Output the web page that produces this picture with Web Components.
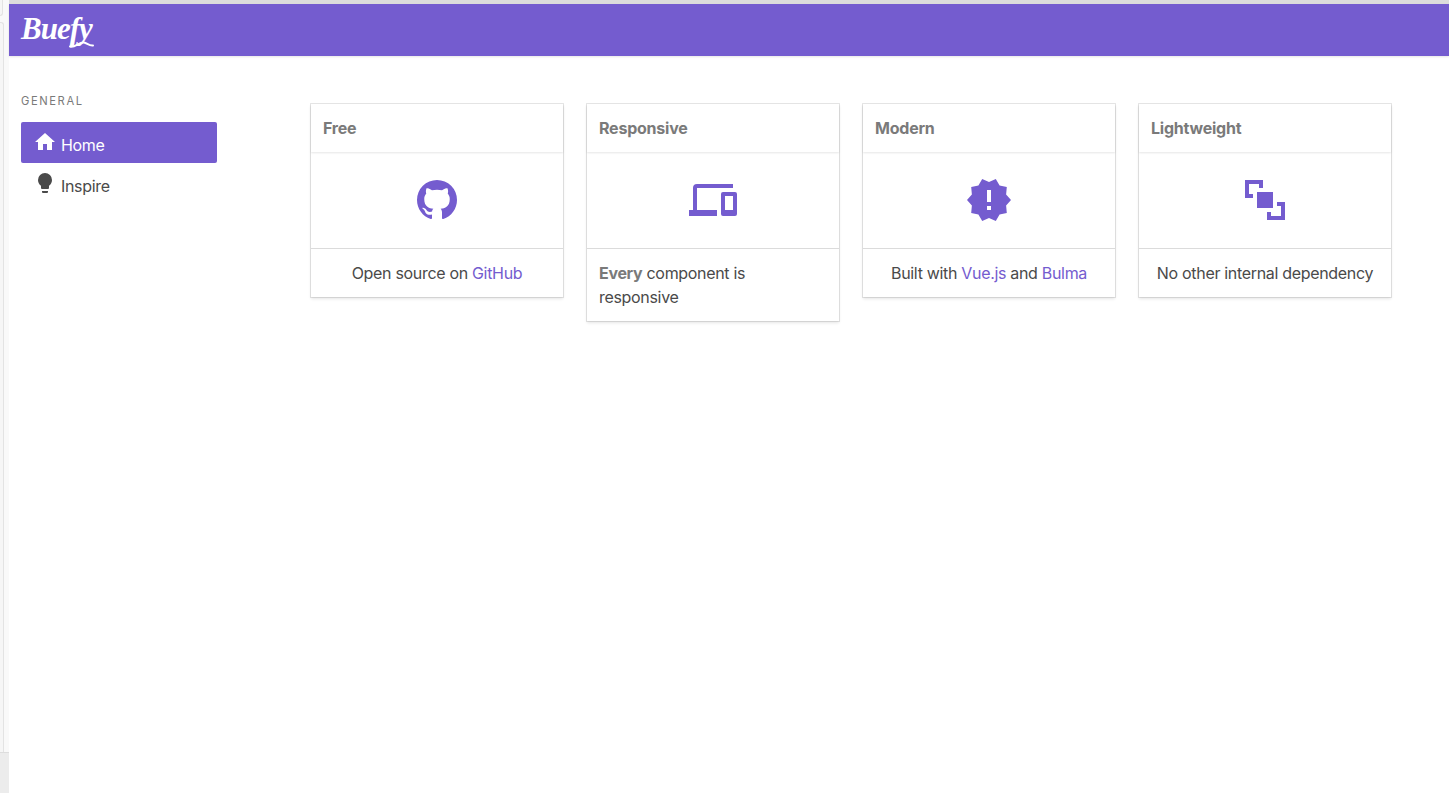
<!DOCTYPE html>
<html lang="en">
<head>
<meta charset="UTF-8">
<title>Buefy</title>
<style>
  html, body { margin: 0; height: 100%; background: #fff; }
  body { font-family: Inter, "Liberation Sans", sans-serif; font-size: 16px; line-height: 24px; letter-spacing: -.32px; color: #4a4a4a; }
  a { color: #745ccf; text-decoration: none; }
  b { color: #7a7a7a; }
</style>
</head>
<body>
<template id="icon-paths">
  <svg data-name="home"><path d="M10,20V14H14V20H19V12H22L12,3L2,12H5V20H10Z"/></svg>
  <svg data-name="lightbulb"><path d="M12,2A7,7 0 0,0 5,9C5,11.38 6.19,13.47 8,14.74V17A1,1 0 0,0 9,18H15A1,1 0 0,0 16,17V14.74C17.81,13.47 19,11.38 19,9A7,7 0 0,0 12,2M9,21A1,1 0 0,0 10,22H14A1,1 0 0,0 15,21V20H9V21Z"/></svg>
  <svg data-name="github"><path d="M12,2A10,10 0 0,0 2,12C2,16.42 4.87,20.17 8.84,21.5C9.34,21.58 9.5,21.27 9.5,21C9.5,20.77 9.5,20.14 9.5,19.31C6.73,19.91 6.14,17.97 6.14,17.97C5.68,16.81 5.03,16.5 5.03,16.5C4.12,15.88 5.1,15.9 5.1,15.9C6.1,15.97 6.63,16.93 6.63,16.93C7.5,18.45 8.97,18 9.54,17.76C9.63,17.11 9.89,16.67 10.17,16.42C7.95,16.17 5.62,15.31 5.62,11.5C5.62,10.39 6,9.5 6.65,8.79C6.55,8.54 6.2,7.5 6.75,6.15C6.75,6.15 7.59,5.88 9.5,7.17C10.29,6.95 11.15,6.84 12,6.84C12.85,6.84 13.71,6.95 14.5,7.17C16.41,5.88 17.25,6.15 17.25,6.15C17.8,7.5 17.45,8.54 17.35,8.79C18,9.5 18.38,10.39 18.38,11.5C18.38,15.32 16.04,16.16 13.81,16.41C14.17,16.72 14.5,17.33 14.5,18.26C14.5,19.6 14.5,20.68 14.5,21C14.5,21.27 14.66,21.59 15.17,21.5C19.14,20.16 22,16.42 22,12A10,10 0 0,0 12,2Z"/></svg>
  <svg data-name="cellphone-link"><path d="M22,17H18V10H22M23,8H17A1,1 0 0,0 16,9V19A1,1 0 0,0 17,20H23A1,1 0 0,0 24,19V9A1,1 0 0,0 23,8M4,6H22V4H4A2,2 0 0,0 2,6V17H0V20H14V17H4V6Z"/></svg>
  <svg data-name="alert-decagram"><path d="M23,12L20.56,9.22L20.9,5.54L17.29,4.72L15.4,1.54L12,3L8.6,1.54L6.71,4.72L3.1,5.53L3.44,9.21L1,12L3.44,14.78L3.1,18.47L6.71,19.29L8.6,22.47L12,21L15.4,22.46L17.29,19.28L20.9,18.46L20.56,14.78L23,12M13,17H11V15H13V17M13,13H11V7H13V13Z"/></svg>
  <svg data-name="arrange-send-to-back"><path d="M2,2H11V6H9V4H4V9H6V11H2V2M22,13V22H13V18H15V20H20V15H18V13H22M8,8H16V16H8V8Z"/></svg>
</template>

<app-shell>
  <app-navbar slot="nav"></app-navbar>
  <side-menu slot="menu">
    <menu-item icon="home" active>Home</menu-item>
    <menu-item icon="lightbulb">Inspire</menu-item>
  </side-menu>
  <card-grid slot="content">
    <feature-card heading="Free" icon="github">Open source on <a href="#">GitHub</a></feature-card>
    <feature-card heading="Responsive" icon="cellphone-link" left><b>Every</b> component is responsive</feature-card>
    <feature-card heading="Modern" icon="alert-decagram">Built with <a href="#">Vue.js</a> and <a href="#">Bulma</a></feature-card>
    <feature-card heading="Lightweight" icon="arrange-send-to-back">No other internal dependency</feature-card>
  </card-grid>
</app-shell>

<script>
  const paths = document.getElementById('icon-paths').content;

  class BIcon extends HTMLElement {
    constructor() {
      super();
      const size = this.getAttribute('size') || 24;
      const src = paths.querySelector(`[data-name="${this.getAttribute('name')}"] path`);
      this.attachShadow({ mode: 'open' }).innerHTML = `
        <style>
          :host { display: block; width: ${size}px; height: ${size}px; flex: none; }
          svg { display: block; width: 100%; height: 100%; fill: currentColor; }
        </style>
        <svg viewBox="0 0 24 24"><path d="${src.getAttribute('d')}"/></svg>`;
    }
  }

  class AppNavbar extends HTMLElement {
    constructor() {
      super();
      this.attachShadow({ mode: 'open' }).innerHTML = `
        <style>
          :host {
            display: flex; align-items: center; height: 52px; padding-left: 12px;
            background: #745ccf; color: #fff;
            box-shadow: 0 1px 2px rgba(10,10,10,.1);
            position: relative;
          }
          .logo {
            position: relative;
            font: italic bold 31px/1 "Liberation Serif", serif;
            letter-spacing: -1px;
            margin-top: -3px;
          }
          svg { position: absolute; left: 46px; top: 25px; width: 27px; height: 11px; fill: none; stroke: #fff; stroke-width: 2; stroke-linecap: round; }
        </style>
        <div class="logo">Buefy<svg viewBox="0 0 27 11"><path d="M3,8.5 C8,10 12,4 17,4.5 C20,5 22,8 26,7.5"/></svg></div>`;
    }
  }

  class SideMenu extends HTMLElement {
    constructor() {
      super();
      this.attachShadow({ mode: 'open' }).innerHTML = `
        <style>
          :host { display: block; width: 196px; flex: none; padding: 33px 0 0 12px; }
          p {
            margin: 0 0 9px; font-size: 11.2px; line-height: 24px; letter-spacing: 1.6px;
            text-transform: uppercase; color: #7a7a7a;
          }
          div { display: flex; flex-direction: column; }
        </style>
        <p>General</p>
        <div><slot></slot></div>`;
    }
  }

  class MenuItem extends HTMLElement {
    constructor() {
      super();
      this.attachShadow({ mode: 'open' }).innerHTML = `
        <style>
          :host {
            display: flex; height: 41px; box-sizing: border-box; padding: 8px 12px 0;
            gap: 4px; border-radius: 2px; color: #4a4a4a;
          }
          :host([active]) { background: #745ccf; color: #fff; }
          span { padding-top: 3px; }
        </style>
        <b-icon name="${this.getAttribute('icon')}"></b-icon>
        <span><slot></slot></span>`;
    }
  }

  class FeatureCard extends HTMLElement {
    constructor() {
      super();
      this.attachShadow({ mode: 'open' }).innerHTML = `
        <style>
          :host {
            display: block; background: #fff; color: #4a4a4a;
            box-shadow: 0 2px 3px rgba(10,10,10,.1), 0 0 0 1px rgba(10,10,10,.1);
          }
          header {
            padding: 12px; font-weight: 700; color: #7a7a7a; letter-spacing: -.22px;
            box-shadow: 0 1px 2px rgba(10,10,10,.1);
          }
          .body { display: flex; justify-content: center; padding: 24px; color: #745ccf; }
          footer { border-top: 1px solid #dbdbdb; padding: 12px; text-align: center; }
          :host([left]) footer { text-align: left; }
        </style>
        <header>${this.getAttribute('heading')}</header>
        <div class="body"><b-icon name="${this.getAttribute('icon')}" size="48"></b-icon></div>
        <footer><slot></slot></footer>`;
    }
  }

  class CardGrid extends HTMLElement {
    constructor() {
      super();
      this.attachShadow({ mode: 'open' }).innerHTML = `
        <style>
          :host {
            display: grid; grid-template-columns: repeat(4, 252px); gap: 24px;
            align-items: start; margin: 48px 0 0 94px;
          }
        </style>
        <slot></slot>`;
    }
  }

  class AppShell extends HTMLElement {
    constructor() {
      super();
      this.attachShadow({ mode: 'open' }).innerHTML = `
        <style>
          :host { display: flex; min-height: 793px; background: #fff; }
          .gutter { width: 9px; flex: none; display: flex; flex-direction: column; gap: 6px; background: #f9f9f9; }
          .gutter i { display: block; width: 3px; border-right: 1px solid #e3e3e3; background: #f6f6f6; }
          .gutter .tab { height: 16px; border-bottom: 1px solid #e3e3e3; border-bottom-right-radius: 3px; box-sizing: border-box; }
          .gutter .rail { flex: 1; border-top-right-radius: 3px; border-top: 1px solid #e3e3e3; }
          .gutter u { display: block; height: 40px; margin-top: -6px; background: #ececec; border-top: 1px solid #ddd; }
          .main { flex: 1; min-width: 0; display: flex; flex-direction: column; }
          .top { height: 4px; background: #dcdcdc; flex: none; }
          .row { display: flex; }
        </style>
        <div class="gutter"><i class="tab"></i><i class="rail"></i><u></u></div>
        <div class="main">
          <div class="top"></div>
          <slot name="nav"></slot>
          <div class="row"><slot name="menu"></slot><slot name="content"></slot></div>
        </div>`;
    }
  }

  // icons first, the others render b-icon inside their shadow roots
  customElements.define('b-icon', BIcon);
  customElements.define('app-navbar', AppNavbar);
  customElements.define('side-menu', SideMenu);
  customElements.define('menu-item', MenuItem);
  customElements.define('feature-card', FeatureCard);
  customElements.define('card-grid', CardGrid);
  customElements.define('app-shell', AppShell);
</script>
</body>
</html>
